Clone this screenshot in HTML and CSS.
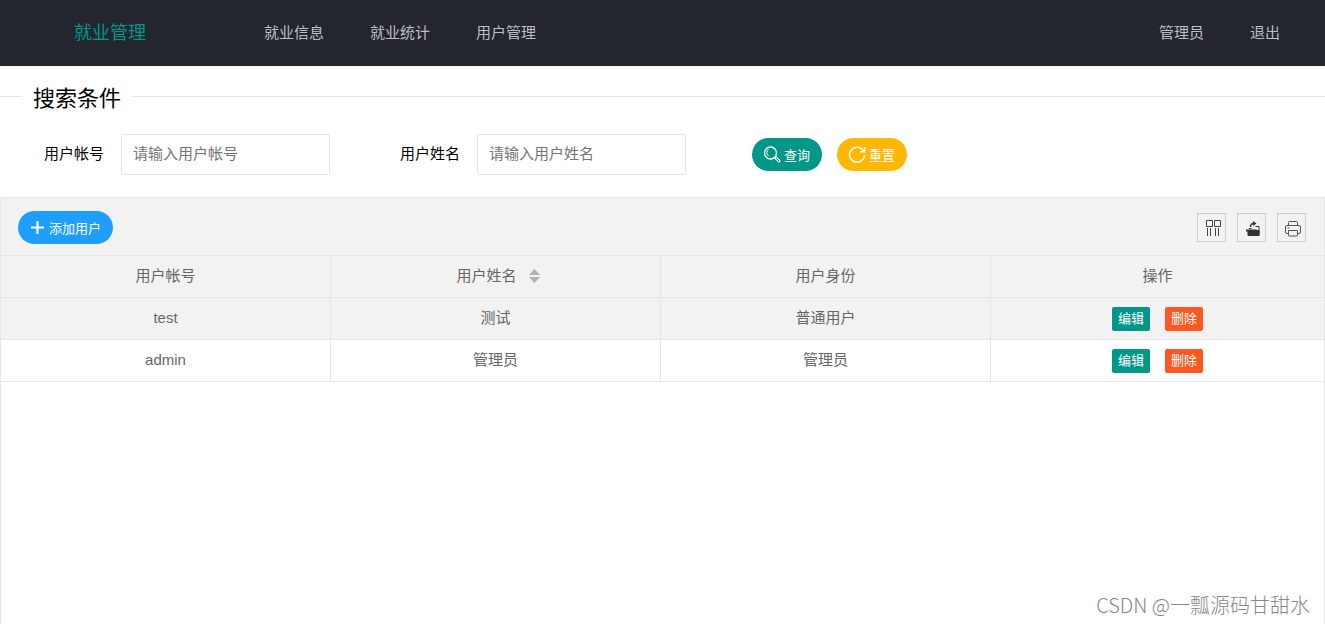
FILE: index.html
```html
<!DOCTYPE html>
<html lang="zh-CN">
<head>
<meta charset="utf-8">
<title>就业管理</title>
<link rel="stylesheet" href="styles.css">
</head>
<body>
<header class="header">
  <div class="logo">就业管理</div>
  <nav class="nav">
    <a href="#">就业信息</a>
    <a href="#">就业统计</a>
    <a href="#">用户管理</a>
  </nav>
  <nav class="nav nav-right">
    <a href="#">管理员</a>
    <a href="#">退出</a>
  </nav>
</header>
<main class="main">
  <form>
    <fieldset class="search">
      <legend>搜索条件</legend>
      <div class="search-row">
        <div class="field">
          <label for="account">用户帐号</label>
          <input id="account" type="text" placeholder="请输入用户帐号">
        </div>
        <div class="field">
          <label for="username">用户姓名</label>
          <input id="username" type="text" placeholder="请输入用户姓名">
        </div>
        <div class="actions">
          <button type="button" class="btn btn-green">
            <svg width="18" height="18" viewBox="0 0 18 18" fill="none" stroke="currentColor"><circle cx="7.500" cy="7" r="6" stroke-width="1.300"/><path d="M5.500 3.500a4 4 0 0 0 0 6.500" stroke-width="1"/><path d="M12.500 11.500l3.500 3.500" stroke-width="3" stroke-linecap="round"/><path d="M13 12l3 3" stroke="#009688" stroke-width="1"/></svg>
            <span>查询</span>
          </button>
          <button type="reset" class="btn btn-yellow">
            <svg width="18" height="18" viewBox="0 0 18 18" fill="none" stroke="currentColor" stroke-width="1.400"><path d="M15.600 5.200A7.500 7.500 0 1 0 16.500 9"/><path d="M16.600 1v4.700h-4.600"/></svg>
            <span>重置</span>
          </button>
        </div>
      </div>
    </fieldset>
  </form>
  <section class="panel">
    <div class="toolbar">
      <button type="button" class="btn btn-blue">
        <svg width="15" height="18" viewBox="0 0 15 18" fill="none" stroke="currentColor" stroke-width="2.200"><path d="M1 8.500h13M7.500 2v13"/></svg>
        <span>添加用户</span>
      </button>
      <div class="tools">
        <button type="button" class="tool" aria-label="筛选列">
          <svg width="18" height="18" viewBox="0 0 18 18" fill="none" stroke="#444"><path d="M3.500 1.500h6v6h-6zM11.500 1.500h6v6h-6z"/><path d="M4.500 9v8M7.500 9v8M12.500 9v8M15.500 9v8"/></svg>
        </button>
        <button type="button" class="tool" aria-label="导出">
          <svg width="18" height="18" viewBox="0 0 18 18" fill="none" stroke="#333"><path d="M5 11.500v5h11v-5z" fill="#333"/><path d="M3 11.500h10l2 2" stroke-width="2"/><path d="M12.500 7.500h3.500v9M6 9.500h2.500" /><path d="M7.500 8c0-3 1-3.500 3.500-3.500" stroke-width="1.500"/><path d="M10 2l3.500 2.500L10 7z" fill="#333" stroke="none"/></svg>
        </button>
        <button type="button" class="tool" aria-label="打印">
          <svg width="18" height="18" viewBox="0 0 18 18" fill="none" stroke="#555"><path d="M5.500 6.500v-3q0-1 1-1h7q1 0 1 1v3"/><path d="M5.500 14.500h-1.500q-1.500 0-1.500-1.500V8q0-1.500 1.500-1.500h12q1.500 0 1.500 1.500v5q0 1.500-1.500 1.500h-1.500"/><path d="M5.500 11.500h9v4.500q0 1-1 1h-7q-1 0-1-1z"/><path d="M4.500 9h2"/></svg>
        </button>
      </div>
    </div>
    <table class="table">
      <colgroup><col class="col"><col class="col"><col class="col"><col></colgroup>
      <thead>
        <tr>
          <th>用户帐号</th>
          <th><span class="sortable">用户姓名<svg width="11" height="14" viewBox="0 0 11 14" fill="#b2b2b2"><path d="M0 6l5.500-6L11 6zM0 8h11l-5.500 6z"/></svg></span></th>
          <th>用户身份</th>
          <th>操作</th>
        </tr>
      </thead>
      <tbody>
        <tr class="hover">
          <td>test</td><td>测试</td><td>普通用户</td>
          <td><div class="ops"><button type="button" class="op btn-green">编辑</button><button type="button" class="op btn-red">删除</button></div></td>
        </tr>
        <tr>
          <td>admin</td><td>管理员</td><td>管理员</td>
          <td><div class="ops"><button type="button" class="op btn-green">编辑</button><button type="button" class="op btn-red">删除</button></div></td>
        </tr>
      </tbody>
    </table>
  </section>
</main>
<div class="watermark">CSDN @一瓢源码甘甜水</div>
</body>
</html>
```
FILE: styles.css
```css
* { box-sizing: border-box; }
body {
  margin: 0;
  height: 100vh;
  display: flex;
  flex-direction: column;
  overflow: hidden;
  background: #fff;
  color: #000;
  font: 15px/24px "Liberation Sans", "Noto Sans CJK SC", sans-serif;
}
button, input { font: inherit; margin: 0; }
button { cursor: pointer; }
svg { display: block; flex: none; }

.header {
  display: flex;
  align-items: center;
  height: 66px;
  padding-right: 22px;
  background: #23262e;
}
.logo {
  width: 220px;
  margin-right: 21px;
  text-align: center;
  color: #009688;
  font-size: 18px;
}
.nav { display: flex; }
.nav a {
  padding: 0 23px;
  color: #bdbebf;
  text-decoration: none;
}
.nav-right { margin-left: auto; }

.main {
  flex: 1;
  display: flex;
  flex-direction: column;
  padding-top: 14px;
}
.search {
  margin: 0;
  padding: 21px 0 22px;
  border: 0;
  border-top: 1px solid #e6e6e6;
}
.search legend {
  margin-left: 22px;
  padding: 5px 11px 0;
  font-size: 22px;
  line-height: 28px;
}
.search-row { display: flex; align-items: center; }
.field { display: flex; align-items: center; margin-right: 26px; }
.field label {
  width: 121px;
  padding: 0 17px 2px 0;
  text-align: right;
}
.field input {
  width: 209px;
  height: 41px;
  padding: 0 11px 2px;
  border: 1px solid #e6e6e6;
  border-radius: 2px;
  background: #fff;
  outline: none;
}
.field input::placeholder { color: #757575; opacity: 1; }
.actions { display: flex; gap: 15px; margin-left: 40px; }

.btn {
  display: flex;
  align-items: center;
  gap: 3px;
  height: 33px;
  padding: 0 12px 0 11px;
  border: 0;
  border-radius: 17px;
  color: #fff;
  font-size: 13px;
}
.btn span { padding-top: 2px; }
.btn-green { background: #009688; }
.btn-yellow { background: #ffb800; }
.btn-blue { background: #1e9fff; gap: 4px; padding: 0 12px; }
.btn-red { background: #ff5722; }

.panel {
  flex: 1;
  border: 1px solid #e6e6e6;
  border-bottom: 0;
}
.toolbar {
  display: flex;
  align-items: center;
  justify-content: space-between;
  height: 58px;
  padding: 2px 18px 0 17px;
  background: #f2f2f2;
  border-bottom: 1px solid #e6e6e6;
}
.tools { display: flex; gap: 11px; }
.tool {
  display: grid;
  place-items: center;
  width: 29px;
  height: 29px;
  padding: 0;
  border: 1px solid #ccc;
  background: transparent;
}

.table {
  width: 100%;
  table-layout: fixed;
  border-collapse: separate;
  border-spacing: 0;
  color: #666;
}
.col { width: 330px; }
.table th, .table td {
  height: 42px;
  padding: 0 0 2px;
  border-right: 1px solid #e6e6e6;
  border-bottom: 1px solid #e6e6e6;
  text-align: center;
  font-weight: 400;
}
.table th:last-child, .table td:last-child { border-right: 0; }
.table thead, .hover { background: #f2f2f2; }
.sortable {
  display: inline-flex;
  align-items: center;
  gap: 12px;
  padding-left: 5px;
}
.ops { display: flex; justify-content: center; gap: 15px; padding-top: 2px; }
.op {
  width: 38px;
  height: 24px;
  padding: 0;
  border: 0;
  border-radius: 2px;
  color: #fff;
  font-size: 13px;
  line-height: 22px;
}

.watermark {
  position: absolute;
  right: 15px;
  bottom: 4px;
  color: #888;
  font: 300 20px/30px "Noto Sans CJK SC", sans-serif;
}
```
